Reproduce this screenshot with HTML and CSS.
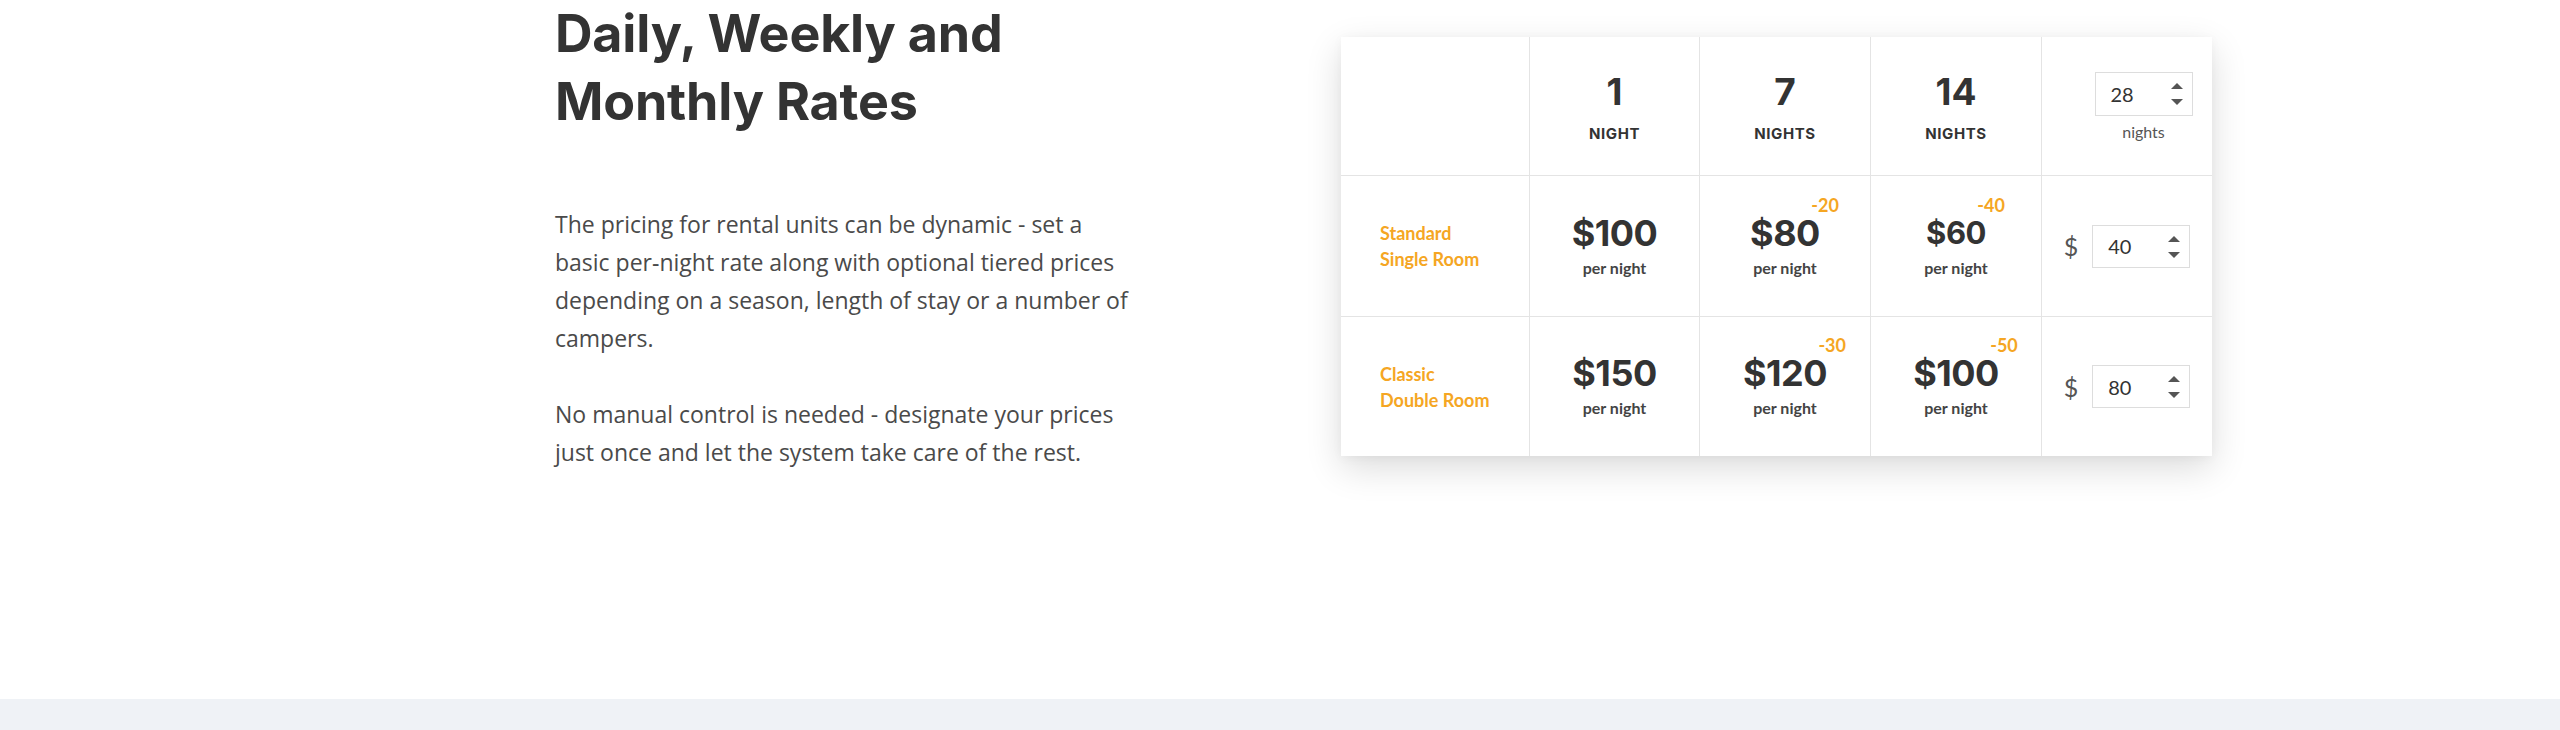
FILE: index.html
```html
<!DOCTYPE html>
<html lang="en">
<head>
<meta charset="utf-8">
<title>Daily, Weekly and Monthly Rates</title>
<link rel="stylesheet" href="styles.css">
</head>
<body>
<section class="rates">
  <div class="intro">
    <h2 class="title">Daily, Weekly and Monthly Rates</h2>
    <p class="text">The pricing for rental units can be dynamic - set a basic per&#8209;night rate along with optional tiered prices depending on a season, length of stay or a number of campers.</p>
    <p class="text text-second">No manual control is needed - designate your prices just once and let the system take care of the rest.</p>
  </div>

  <div class="card">
    <div class="cell head"></div>
    <div class="cell head"><span class="nights-num">1</span><span class="nights-label">NIGHT</span></div>
    <div class="cell head"><span class="nights-num">7</span><span class="nights-label">NIGHTS</span></div>
    <div class="cell head"><span class="nights-num">14</span><span class="nights-label">NIGHTS</span></div>
    <div class="cell head head-custom last-col">
      <div class="field">
        <span class="field-value">28</span>
        <svg class="spin" width="12" height="22" viewBox="0 0 12 22"><polygon points="0,6 6,0 12,6"/><polygon points="0,16 12,16 6,22"/></svg>
      </div>
      <span class="field-caption">nights</span>
    </div>

    <div class="cell room"><span>Standard</span><span>Single Room</span></div>
    <div class="cell price"><span class="amount">$100</span><span class="per">per night</span></div>
    <div class="cell price"><span class="amount">$80<span class="discount">-20</span></span><span class="per">per night</span></div>
    <div class="cell price"><span class="amount amount-small">$60<span class="discount">-40</span></span><span class="per">per night</span></div>
    <div class="cell custom last-col">
      <span class="currency">$</span>
      <div class="field">
        <span class="field-value">40</span>
        <svg class="spin" width="12" height="22" viewBox="0 0 12 22"><polygon points="0,6 6,0 12,6"/><polygon points="0,16 12,16 6,22"/></svg>
      </div>
    </div>

    <div class="cell room last-row"><span>Classic</span><span>Double Room</span></div>
    <div class="cell price last-row"><span class="amount">$150</span><span class="per">per night</span></div>
    <div class="cell price last-row"><span class="amount">$120<span class="discount">-30</span></span><span class="per">per night</span></div>
    <div class="cell price last-row"><span class="amount">$100<span class="discount">-50</span></span><span class="per">per night</span></div>
    <div class="cell custom last-col last-row">
      <span class="currency">$</span>
      <div class="field">
        <span class="field-value">80</span>
        <svg class="spin" width="12" height="22" viewBox="0 0 12 22"><polygon points="0,6 6,0 12,6"/><polygon points="0,16 12,16 6,22"/></svg>
      </div>
    </div>
  </div>
</section>
<div class="band"></div>
</body>
</html>
```

FILE: styles.css
```css
* { box-sizing: border-box; }

html, body {
  margin: 0;
  padding: 0;
  background: #ffffff;
  overflow: hidden;
}

.rates {
  display: flex;
  align-items: flex-start;
  height: 699px;
  padding-left: 555px;
}

.intro {
  width: 580px;
  flex: none;
}

.title {
  margin: 0;
  font-family: Inter, "Noto Sans", sans-serif;
  font-weight: 700;
  font-size: 52px;
  line-height: 68px;
  letter-spacing: -0.2px;
  color: #333333;
}

.text {
  margin: 69px 0 0;
  font-family: "Open Sans", "Noto Sans", sans-serif;
  font-size: 23px;
  line-height: 38px;
  color: #4a4a4a;
}

.text-second {
  margin-top: 38px;
}

.card {
  flex: none;
  margin-top: 37px;
  margin-left: 206px;
  display: grid;
  grid-template-columns: 189px 170px 171px 171px 170px;
  grid-template-rows: 139px 141px 139px;
  background: #ffffff;
  box-shadow: 0 12px 34px rgba(0, 0, 0, 0.14), 0 2px 10px rgba(0, 0, 0, 0.04);
}

.cell {
  border-right: 1px solid #e4e4e4;
  border-bottom: 1px solid #e4e4e4;
  display: flex;
  flex-direction: column;
  align-items: center;
  justify-content: center;
}

.last-col { border-right: none; }
.last-row { border-bottom: none; }

.head {
  padding-top: 2px;
}

.nights-num {
  font-family: Inter, sans-serif;
  font-weight: 700;
  font-size: 37px;
  line-height: 40px;
  color: #333333;
}

.nights-label {
  margin-top: 13px;
  font-family: Inter, sans-serif;
  font-weight: 700;
  font-size: 15px;
  line-height: 18px;
  letter-spacing: 0.6px;
  color: #333333;
}

.head-custom {
  justify-content: flex-start;
  padding-left: 33px;
  padding-top: 35px;
}

.field {
  position: relative;
  width: 98px;
  height: 44px;
  border: 1px solid #dddddd;
  display: flex;
  align-items: center;
  padding-left: 15px;
}

.field-value {
  font-family: Lato, sans-serif;
  font-size: 20px;
  color: #333333;
}

.spin {
  position: absolute;
  right: 9px;
  top: 10px;
  fill: #555555;
}

.field-caption {
  margin-top: 5px;
  font-family: Lato, sans-serif;
  font-size: 16px;
  line-height: 22px;
  color: #555555;
}

.room {
  align-items: flex-start;
  padding-left: 39px;
  font-family: Lato, sans-serif;
  font-weight: 700;
  font-size: 18px;
  line-height: 26px;
  color: #f5a623;
}

.price {
  padding-bottom: 2px;
}

.amount {
  position: relative;
  font-family: Inter, sans-serif;
  font-weight: 700;
  font-size: 36px;
  line-height: 40px;
  color: #333333;
  letter-spacing: -0.5px;
}

.amount-small {
  font-size: 31px;
}

.discount {
  position: absolute;
  right: -19px;
  top: -18px;
  font-family: Lato, sans-serif;
  font-weight: 700;
  font-size: 18px;
  line-height: 20px;
  letter-spacing: 0;
  color: #f5a623;
}

.per {
  margin-top: 5px;
  font-family: Lato, sans-serif;
  font-weight: 700;
  font-size: 16px;
  line-height: 20px;
  color: #444444;
}

.custom {
  flex-direction: row;
  gap: 14px;
}

.custom .field {
  height: 43px;
}

.currency {
  font-family: Lato, sans-serif;
  font-weight: 400;
  font-size: 25px;
  color: #555555;
}

.band {
  height: 100px;
  background: #eff2f6;
}
```
